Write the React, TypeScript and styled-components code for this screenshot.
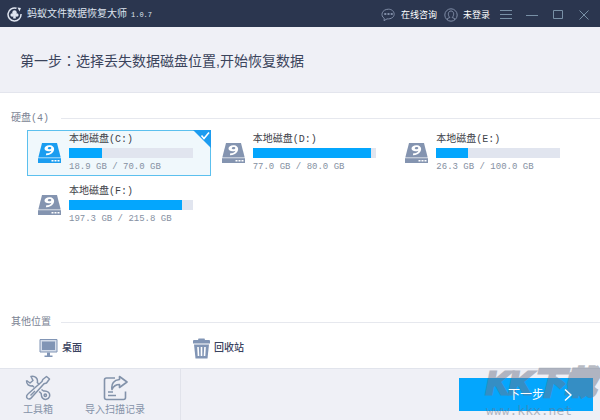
import React, { useState } from "react";
import styled, { createGlobalStyle } from "styled-components";

const Global = createGlobalStyle`
  * { box-sizing: border-box; }
  html, body, #root { height: 100%; }
  body {
    margin: 0;
    background: #fff;
    color: #3a4356;
    font-family: "Liberation Sans", "Noto Sans CJK SC", sans-serif;
  }
  button {
    margin: 0;
    padding: 0;
    border: 0;
    background: none;
    color: inherit;
    font: inherit;
    text-align: left;
    cursor: pointer;
  }
  svg { display: block; flex: none; }
`;

const Window = styled.div`
  display: flex;
  flex-direction: column;
  min-height: 100%;
`;

const TitleBar = styled.header`
  display: flex;
  align-items: center;
  height: 27px;
  padding: 2px 9px 0 7px;
  background: #2b364f;
  color: #dfe5f0;
`;

const AppName = styled.h1`
  flex: 1;
  margin: 0 0 0 5px;
  font-size: 10px;
  font-weight: 400;
  line-height: 16px;
  white-space: nowrap;
`;

const Version = styled.span`
  margin-left: 4px;
  font-family: "Liberation Mono", monospace;
  font-size: 7px;
`;

const TitleLink = styled.button`
  display: flex;
  align-items: center;
  gap: 5px;
  margin-right: 7px;
  font-size: 9px;
  line-height: 16px;
  color: #fff;
  white-space: nowrap;
`;

const WindowButtons = styled.div`
  display: flex;
  gap: 12px;
  margin-left: 2px;
`;

const StepBanner = styled.section`
  display: flex;
  align-items: center;
  height: 66px;
  padding: 2px 20px 0;
  background: #eff0f6;
  border-bottom: 1px solid #e3e5ed;
`;

const StepTitle = styled.h2`
  margin: 0;
  font-size: 14px;
  font-weight: 400;
  line-height: 20px;
  color: #3b445c;
`;

const CenteredColon = styled.span`
  font-family: "Noto Sans CJK TC", sans-serif;
`;

const Content = styled.main`
  flex: 1;
  display: flex;
  flex-direction: column;
  justify-content: space-between;
  padding: 17px 0 9px 11px;
`;

const SectionHead = styled.div`
  display: flex;
  align-items: center;
  height: 16px;
  &::after {
    content: "";
    flex: 1;
    height: 1px;
    background: #e6e8ee;
  }
`;

const SectionTitle = styled.h3`
  width: 50px;
  margin: 0;
  padding-top: 2px;
  font-family: "Liberation Mono", "Noto Sans CJK SC", monospace;
  font-size: 10px;
  font-weight: 400;
  line-height: 16px;
  color: #7b8494;
  white-space: nowrap;
`;

const DriveGrid = styled.div`
  display: grid;
  grid-template-columns: repeat(3, minmax(0, 1fr));
  row-gap: 6px;
  margin: 4px 22px 0 16px;
`;

const DriveCard = styled.button<{ $selected: boolean }>`
  position: relative;
  display: flex;
  align-items: center;
  gap: 7px;
  height: 46px;
  padding: 0 17px 0 9px;
  border: 1px solid ${(p) => (p.$selected ? "#5cc0ee" : "transparent")};
  background: ${(p) => (p.$selected ? "#f0f8fc" : "transparent")};
  color: ${(p) => (p.$selected ? "#1b9df0" : "#8494b0")};
`;

const DriveInfo = styled.span`
  flex: 1;
  min-width: 0;
  display: flex;
  flex-direction: column;
`;

const DriveName = styled.span`
  font-family: "Liberation Mono", "Noto Sans CJK SC", monospace;
  font-size: 10px;
  line-height: 16px;
  color: #3d4148;
`;

const Track = styled.span`
  display: block;
  height: 10px;
  background: #e1e5ef;
`;

const Fill = styled.span`
  display: block;
  height: 100%;
  background: #04a6fd;
`;

const DriveSize = styled.span`
  margin-top: 1px;
  font-family: "Liberation Mono", monospace;
  font-size: 9px;
  line-height: 16px;
  color: #8590a2;
  white-space: nowrap;
`;

const Corner = styled.svg`
  position: absolute;
  top: -1px;
  right: -1px;
`;

const Places = styled.div`
  display: flex;
  margin: 7px 0 0 28px;
`;

const Place = styled.button`
  display: flex;
  align-items: center;
  gap: 4px;
  width: 154px;
  height: 22px;
  font-size: 10px;
  font-weight: 500;
  line-height: 16px;
  color: #39425e;
`;

const Footer = styled.footer`
  display: flex;
  height: 52px;
  padding-right: 7px;
  background: #eff0f6;
  border-top: 1px solid #e1e4ec;
`;

const Tools = styled.nav`
  display: flex;
  gap: 32px;
  width: 181px;
  padding: 6px 0 0 23px;
  border-right: 1px solid #e1e3eb;
`;

const Tool = styled.button`
  display: flex;
  flex-direction: column;
  align-items: center;
  gap: 1px;
  height: 43px;
  font-size: 10px;
  line-height: 16px;
  color: #8592a8;
  white-space: nowrap;
`;

const NextArea = styled.div`
  position: relative;
  align-self: flex-start;
  margin: 9px 0 0 auto;
`;

const NextButton = styled.button`
  display: flex;
  align-items: center;
  justify-content: flex-end;
  width: 134px;
  height: 33px;
  padding-right: 21px;
  background: #04a6fd;
  color: #fff;
  font-size: 12px;
  line-height: 20px;
`;

const NextLabel = styled.span`
  position: relative;
  z-index: 2;
  display: flex;
  align-items: center;
  gap: 20px;
`;

const Watermark = styled.div`
  position: absolute;
  z-index: 1;
  top: -13px;
  left: 27px;
  color: #6c7588;
  font-weight: 700;
  opacity: 0.48;
  pointer-events: none;
  white-space: nowrap;
`;

const Brand = styled.div`
  font-size: 32px;
  font-style: italic;
  line-height: 36px;
  -webkit-text-stroke: 3px #6c7588;
`;

const Site = styled.div`
  padding-top: 3px;
  font-family: "DejaVu Sans Mono", monospace;
  font-size: 13px;
  font-weight: 400;
  line-height: 14px;
`;

function LogoIcon() {
  return (
    <svg width="15" height="17" viewBox="0 0 15 17" fill="none" aria-hidden="true">
      <path d="M9.500 2.300A6.500 6.500 0 1 0 14 8" stroke="#dfe5f0" strokeWidth="1.500" />
      <path d="M10.500 1.500l3.500 .5-1.500 3.500z" fill="#dfe5f0" />
      <circle cx="7.500" cy="6.500" r="2.200" fill="#dfe5f0" />
      <circle cx="5.200" cy="9" r="1.800" fill="#dfe5f0" />
      <circle cx="9.800" cy="9" r="1.800" fill="#dfe5f0" />
      <path d="M6.200 8h2.600v4.500H6.200z" fill="#dfe5f0" />
    </svg>
  );
}

function ChatIcon() {
  return (
    <svg width="15" height="14" viewBox="0 0 15 14" fill="none" stroke="#7f8ca6" aria-hidden="true">
      <path d="M3.300 10.400C-1 7.800 .8 1.200 7.500 1.200S15.900 10.200 7.500 10.900H6l-3 1.800z" />
      <path d="M3.300 6h2M6.500 6h2M9.700 6h2" strokeWidth="1.800" />
    </svg>
  );
}

function UserIcon() {
  return (
    <svg width="14" height="14" viewBox="0 0 14 14" fill="none" stroke="#7f8ca6" aria-hidden="true">
      <circle cx="7" cy="7" r="6.200" />
      <path d="M3.500 11.800v-1.300l2.300-1C3.300 6.800 4.200 3 7 3s3.700 3.800 1.200 6.500l2.300 1v1.300" />
    </svg>
  );
}

function WindowIcon({ d }: { d: string }) {
  return (
    <svg width="14" height="14" viewBox="0 0 14 14" fill="none" stroke="#7890a6" aria-hidden="true">
      <path d={d} />
    </svg>
  );
}

function DriveIcon() {
  return (
    <svg width="25" height="22" viewBox="0 0 25 22" aria-hidden="true">
      <path d="M5 1h15l3.700 14.500H1.300z" fill="currentColor" />
      <path d="M1 16.200h23v4.800H1z" fill="currentColor" />
      <path d="M14.500 8.700c-2.800 1.300-7 .6-7-2.100 0-2.400 3-3.800 5.800-3.300 3.900.7 4.800 3.900 3 6.500-1.500 2.300-4.300 3.600-7.400 3.500l.4-2c2.300.1 4.400-.8 5.200-2.600zM10.800 6.300c0 1.500 3.500 1.400 3.500-.2 0-1.600-3.500-1.300-3.500.2z" fill="#fff" fillRule="evenodd" />
      <path d="M14.500 18.700h8" stroke="#fff" strokeWidth="1.500" strokeDasharray="2 1" />
    </svg>
  );
}

function DesktopIcon() {
  return (
    <svg width="19" height="20" viewBox="0 0 19 20" aria-hidden="true">
      <path d="M1 1.500h17v12.500H1z" fill="#d5ddea" stroke="#8195b5" />
      <path d="M3 3.500h13v8.500H3z" fill="#8195b5" />
      <path d="M8 14.500h3v3h2.500V19h-8v-1.500H8z" fill="#8195b5" />
    </svg>
  );
}

function TrashIcon() {
  return (
    <svg width="17" height="21" viewBox="0 0 17 21" fill="#8195b5" aria-hidden="true">
      <path d="M5.500 .5h6l.5 1.500h4q1 0 1 1V5.500H0V3q0-1 1-1h4z" />
      <path d="M1 6.500h15L14.500 20.500h-12z" />
      <path d="M5 9l.5 9M8.500 9v9M12 9l-.5 9" stroke="#fff" strokeWidth="1.600" />
    </svg>
  );
}

function ToolboxIcon() {
  return (
    <svg width="26" height="26" viewBox="0 0 26 26" fill="none" stroke="#8292aa" strokeWidth="1.500" strokeLinejoin="round" aria-hidden="true">
      <path d="M1.500 5.500l3.500 2.500 3-2.500-2-4c4-1 7.300 2 6.300 6l2 2M16.500 14.500l2 1.500c4-.6 7 2 6 5.500-1 3-5 4-7 1.500-1.300-1.500-1.200-3-1.300-4.500l-2-2" />
      <path d="M1.500 5.500c0 4 2.500 6 6 5.200l1.500 1.500" />
      <path d="M21.500 1.500l3 2.500-3 4-2.500 .8L7.500 21.500c-1.500 2-3 3.500-5 2-1.800-1.700-.8-3.500 1-5L17 6.500l.8-2z" />
      <path d="M5.500 20.500L10 16" />
      <circle cx="20.300" cy="20.200" r="1.200" />
    </svg>
  );
}

function ImportIcon() {
  return (
    <svg width="26" height="26" viewBox="0 0 26 26" fill="none" stroke="#8292aa" strokeWidth="1.600" strokeLinejoin="round" aria-hidden="true">
      <path d="M13 3H4.500Q2.500 3 2.500 5v17.500q0 2 2 2h17q2 0 2-2V16.500" />
      <path d="M17.500 1.500l7.500 5.500-7.500 5.500V9.500c-4 0-6 1.500-7.500 5C9 8.500 12 5 17.500 4.500z" />
      <path d="M6 17h5M6 20.500h8" />
    </svg>
  );
}

const drives = [
  { letter: "C", used: 18.9, total: 70, share: 27 },
  { letter: "D", used: 77, total: 80, share: 96 },
  { letter: "E", used: 26.3, total: 100, share: 26 },
  { letter: "F", used: 197.3, total: 215.8, share: 91 },
];

export default function App() {
  const [selected, setSelected] = useState("C");

  return (
    <>
      <Global />
      <Window>
        <TitleBar>
          <LogoIcon />
          <AppName>
            蚂蚁文件数据恢复大师<Version>1.0.7</Version>
          </AppName>
          <TitleLink><ChatIcon />在线咨询</TitleLink>
          <TitleLink><UserIcon />未登录</TitleLink>
          <WindowButtons>
            <button aria-label="菜单"><WindowIcon d="M1 2.500h12M1 6.500h12M1 10.500h12" /></button>
            <button aria-label="最小化"><WindowIcon d="M1 7.500h12" /></button>
            <button aria-label="最大化"><WindowIcon d="M2.500 2.500h9v8h-9z" /></button>
            <button aria-label="关闭"><WindowIcon d="M2.500 2.500l9 9M11.500 2.500l-9 9" /></button>
          </WindowButtons>
        </TitleBar>

        <StepBanner>
          <StepTitle>
            第一步<CenteredColon>：</CenteredColon>选择丢失数据磁盘位置,开始恢复数据
          </StepTitle>
        </StepBanner>

        <Content>
          <section>
            <SectionHead><SectionTitle>硬盘(4)</SectionTitle></SectionHead>
            <DriveGrid>
              {drives.map((d) => (
                <DriveCard
                  key={d.letter}
                  $selected={d.letter === selected}
                  aria-pressed={d.letter === selected}
                  onClick={() => setSelected(d.letter)}
                >
                  <DriveIcon />
                  <DriveInfo>
                    <DriveName>本地磁盘({d.letter}:)</DriveName>
                    <Track><Fill style={{ width: `${d.share}%` }} /></Track>
                    <DriveSize>{`${d.used.toFixed(1)} GB / ${d.total.toFixed(1)} GB`}</DriveSize>
                  </DriveInfo>
                  {d.letter === selected && (
                    <Corner width="18" height="18" viewBox="0 0 18 18" aria-hidden="true">
                      <path d="M0 0h18v18z" fill="#1c9cf0" />
                      <path d="M8.500 5.500l2.500 3 5-6" fill="none" stroke="#fff" strokeWidth="1.600" />
                    </Corner>
                  )}
                </DriveCard>
              ))}
            </DriveGrid>
          </section>

          <section>
            <SectionHead><SectionTitle>其他位置</SectionTitle></SectionHead>
            <Places>
              <Place><DesktopIcon />桌面</Place>
              <Place><TrashIcon />回收站</Place>
            </Places>
          </section>
        </Content>

        <Footer>
          <Tools>
            <Tool><ToolboxIcon />工具箱</Tool>
            <Tool><ImportIcon />导入扫描记录</Tool>
          </Tools>
          <NextArea>
            <NextButton>
              <NextLabel>
                下一步
                <svg width="8" height="14" viewBox="0 0 8 14" fill="none" stroke="#fff" strokeWidth="1.500" aria-hidden="true">
                  <path d="M1 1.500l6 5.500-6 5.500" />
                </svg>
              </NextLabel>
            </NextButton>
            <Watermark>
              <Brand>KK下载</Brand>
              <Site>www.kkx.net</Site>
            </Watermark>
          </NextArea>
        </Footer>
      </Window>
    </>
  );
}
